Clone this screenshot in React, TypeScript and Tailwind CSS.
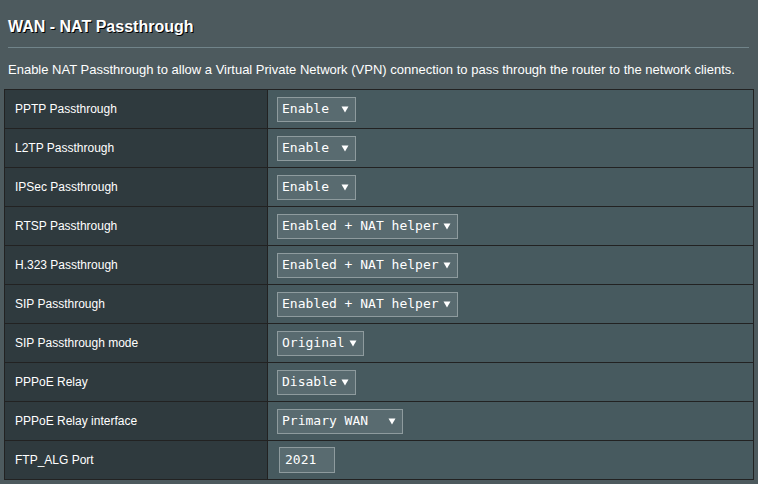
import React from "react";

type Row = {
  label: string;
  kind: "select" | "input";
  value: string;
  width: string;
};

const rows: Row[] = [
  { label: "PPTP Passthrough", kind: "select", value: "Enable", width: "w-[79px]" },
  { label: "L2TP Passthrough", kind: "select", value: "Enable", width: "w-[79px]" },
  { label: "IPSec Passthrough", kind: "select", value: "Enable", width: "w-[79px]" },
  { label: "RTSP Passthrough", kind: "select", value: "Enabled + NAT helper", width: "w-[181px]" },
  { label: "H.323 Passthrough", kind: "select", value: "Enabled + NAT helper", width: "w-[181px]" },
  { label: "SIP Passthrough", kind: "select", value: "Enabled + NAT helper", width: "w-[181px]" },
  { label: "SIP Passthrough mode", kind: "select", value: "Original", width: "w-[87px]" },
  { label: "PPPoE Relay", kind: "select", value: "Disable", width: "w-[79px]" },
  { label: "PPPoE Relay interface", kind: "select", value: "Primary WAN", width: "w-[126px]" },
  { label: "FTP_ALG Port", kind: "input", value: "2021", width: "w-[56px]" },
];

function FakeSelect({ value, width }: { value: string; width: string }) {
  return (
    <div
      className={`flex h-[25px] ${width} items-center justify-between border border-[#8e9b9e] bg-[#596b70] pl-[4px] pr-[6px] font-['DejaVu_Sans_Mono',monospace] text-[13px] text-white`}
    >
      <span className="whitespace-pre">{value}</span>
      <svg width="8" height="7" viewBox="0 0 8 7" className="shrink-0">
        <path d="M0.5 0.5 L7.5 0.5 L4 6.5 Z" fill="#ffffff" />
      </svg>
    </div>
  );
}

export default function App() {
  return (
    <div className="h-[484px] w-[758px] overflow-hidden bg-[#4d5a5e] font-['Liberation_Sans',Arial,sans-serif] text-white">
      <div className="px-[8px] pt-[17px]">
        <h1 className="text-[16px] font-bold leading-[20px] [text-shadow:1px_1px_0_#000]">WAN - NAT Passthrough</h1>
        <div className="mt-[10px] h-px w-[741px] bg-[#71848a]" />
        <p className="mt-[14px] text-[13px] leading-[16px]">
          Enable NAT Passthrough to allow a Virtual Private Network (VPN) connection to pass through the router to the network clients.
        </p>
      </div>

      <table className="ml-[4px] mt-[11px] w-[750px] border-collapse border border-[#222]">
        <tbody>
          {rows.map((row) => (
            <tr key={row.label} className="h-[39px]">
              <th className="w-[263px] border border-[#222] bg-[#2f3a3e] pl-[10px] text-left text-[12px] font-normal">
                {row.label}
              </th>
              <td className="border border-[#222] bg-[#475a5f] pl-[9px]">
                {row.kind === "select" ? (
                  <FakeSelect value={row.value} width={row.width} />
                ) : (
                  <div className="ml-[2px] flex h-[26px] w-[56px] items-center border border-[#8e9b9e] bg-[#596b70] pl-[5px] font-['DejaVu_Sans_Mono',monospace] text-[13px] text-white">
                    {row.value}
                  </div>
                )}
              </td>
            </tr>
          ))}
        </tbody>
      </table>
    </div>
  );
}
